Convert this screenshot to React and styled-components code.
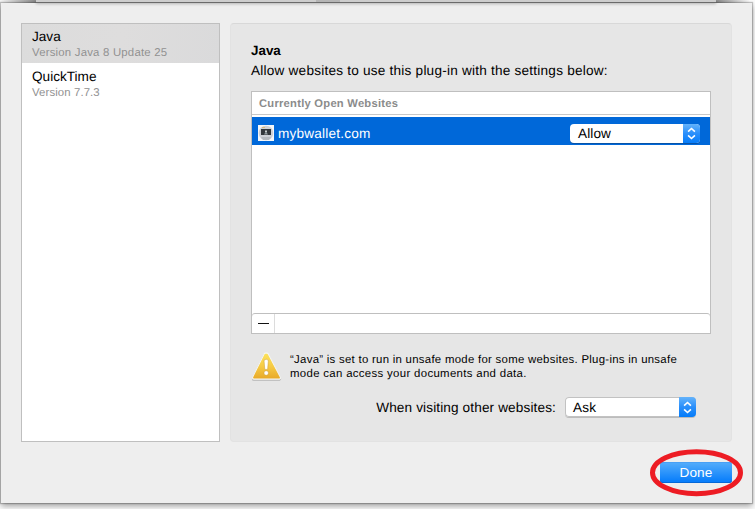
import React from "react";
import styled, { createGlobalStyle } from "styled-components";

const GlobalStyle = createGlobalStyle`
  * { box-sizing: border-box; }
  body { margin: 0; background: #fafafa; overflow: hidden; }
  #root { font-family: "Liberation Sans", Arial, sans-serif; font-size: 13px; color: #000; text-rendering: geometricPrecision; }
`;

const Desktop = styled.div`
  width: 755px;
  height: 509px;
  overflow: hidden;
  display: flex;
  flex-direction: column;
  background: linear-gradient(90deg, #f4f4f4 0, #8f8f8f 34px, #8f8f8f 718px, #fafafa 750px) top / 100% 3px no-repeat, #fafafa;
`;

const ParentWindowEdge = styled.div`
  flex: none;
  width: 680px;
  height: 3px;
  margin-left: 36px;
  border-bottom: 1px solid #6a6a6a;
  background: linear-gradient(90deg, #cdcdcd 280px, #b5b5b5 280px, #b5b5b5 304px, #cdcdcd 304px);
  box-shadow: 0 1px 3px rgba(0, 0, 0, 0.25);
  z-index: 1;
`;

const Sheet = styled.main`
  flex: none;
  width: 751px;
  height: 500px;
  margin-left: 1px;
  padding: 20px 20px 0;
  background: #eeeeee;
  box-shadow: 0 0 1px 1px rgba(0, 0, 0, 0.22), 0 3px 6px rgba(0, 0, 0, 0.36);
`;

const Columns = styled.div`
  display: flex;
  gap: 10px;
  height: 419px;
`;

const PluginList = styled.aside`
  width: 199px;
  border: 1px solid #bfbfbf;
  background: #fff;
`;

const PluginRow = styled.div`
  height: ${(p) => (p.$selected ? 39 : 40)}px;
  padding: ${(p) => (p.$selected ? 5 : 6)}px 10px 0;
  background: ${(p) => (p.$selected ? "linear-gradient(100deg, #dcdcdc, #dedddd 50%, #dadadb)" : "#fff")};
`;

const Label = styled.div`
  font-size: ${(p) => p.$size || 13.6}px;
  line-height: ${(p) => p.$line || 16}px;
  font-weight: ${(p) => (p.$bold ? 700 : 400)};
  letter-spacing: ${(p) => p.$track || 0}px;
  color: ${(p) => p.$color || "#000"};
  white-space: nowrap;
`;

const Panel = styled.section`
  width: 502px;
  padding: 19px 20px 0;
  border: 1px solid #e2e2e2;
  border-top-color: #d8d8d8;
  border-radius: 4px;
  background: #e6e6e6;
`;

const PanelHeading = styled.header`
  height: 48px;
  display: flex;
  flex-direction: column;
  gap: 4px;
`;

const SiteTable = styled.div`
  width: 460px;
  height: 243px;
  display: flex;
  flex-direction: column;
  border: 1px solid #bfbfbf;
  background: #fff;
`;

const TableHeader = styled.div`
  height: 23px;
  padding: 4px 7px 0;
  border-bottom: 1px solid #c8c8c8;
`;

const SiteRow = styled.div`
  height: 28px;
  margin-top: 2px;
  padding: 0 10px 0 6px;
  display: flex;
  align-items: center;
  background: #0068d9;
`;

const SiteName = styled(Label)`
  flex: 1;
  padding: 5px 0 0 4px;
`;

const SiteIcon = styled.svg`
  display: block;
  width: 16px;
  height: 16px;
  margin-top: 4px;
`;

const Popup = styled.div`
  width: ${(p) => p.$width}px;
  height: ${(p) => p.$height}px;
  margin-top: ${(p) => p.$drop || 0}px;
  display: flex;
  align-items: stretch;
  border-radius: 4px;
  overflow: hidden;
  background: #fff;
  box-shadow: ${(p) => (p.$onBlue ? "0 1px 0 #0753a8" : "inset 0 0 0 1px #c2c2c2, 0 1px 0 #bcbcbc")};
`;

const PopupValue = styled(Label)`
  flex: 1;
  padding-left: 8px;
`;

const Stepper = styled.span`
  width: 17px;
  display: grid;
  place-items: center;
  background: linear-gradient(#64b3fb, #2a8ffb 50%, #057cf9);
`;

const TableFooter = styled.div`
  height: 19px;
  margin-top: auto;
  display: flex;
  border-radius: 3px;
  background: #fff;
  box-shadow: 0 -1px 0 #bfbfbf;
`;

const RemoveButton = styled.span`
  width: 23px;
  display: grid;
  place-items: center;
  border-right: 1px solid #dcdcdc;
  &::before {
    content: "";
    width: 11px;
    height: 1px;
    background: #111;
  }
`;

const Warning = styled.div`
  height: 47px;
  padding-top: 18px;
  display: flex;
  gap: 8px;
`;

const WarningText = styled.div`
  padding-top: 1px;
`;

const WarningIcon = styled.svg`
  flex: none;
  display: block;
  width: 31px;
  height: 30px;
`;

const OtherSites = styled.div`
  display: flex;
  justify-content: flex-end;
  gap: 9px;
  padding: 16px 15px 0 0;
`;

const Footer = styled.footer`
  display: flex;
  justify-content: flex-end;
  padding-top: 20px;
`;

const DoneWrap = styled.div`
  position: relative;
`;

const DoneButton = styled.button`
  display: block;
  width: 72px;
  height: 21px;
  padding: 0;
  border: 0;
  border-radius: 3px;
  font-family: inherit;
  background: linear-gradient(#56aefb, #0a7ffb 90%);
  box-shadow: inset 0 1px 0 #49a0f5, inset 0 -1px 0 #0568d8;
`;

const Highlight = styled.svg`
  position: absolute;
  left: -11px;
  top: -14px;
  width: 95px;
  height: 50px;
  pointer-events: none;
`;

function Arrows() {
  return (
    <Stepper>
      <svg width="9" height="13" viewBox="0 0 9 13" fill="none" stroke="#fff" strokeWidth="1.6">
        <path d="M1.1 4.7 4.5 1.5 7.9 4.7M1.1 8.3 4.5 11.5 7.9 8.3" />
      </svg>
    </Stepper>
  );
}

function WebsiteGlyph() {
  return (
    <SiteIcon viewBox="0 0 16 16">
      <rect width="16" height="16" fill="#f5f7f9" />
      <circle cx="8" cy="8" r="7.3" fill="#cdd1d6" />
      <path d="M3 12h10l-2 3H5z" fill="#b4babf" />
      <rect x="3" y="4" width="10" height="6" fill="#32383c" />
      <path d="M6 9.5 8 6l2 3.5z" fill="#8d989c" />
      <rect x="7" y="5.5" width="2" height="1.5" fill="#c4caca" />
      <rect x="4" y="2" width="3" height="1" fill="#d9b97b" />
    </SiteIcon>
  );
}

function Caution() {
  return (
    <WarningIcon viewBox="0 0 31 30">
      <defs>
        <linearGradient id="amber" x2="0" y2="1">
          <stop offset="0" stopColor="#fbe05a" />
          <stop offset="0.5" stopColor="#f6cb45" />
          <stop offset="1" stopColor="#e9ac2b" />
        </linearGradient>
      </defs>
      <path d="M2.8 26.9 14.2 3.4h1.6L28.2 26.9Z" fill="#b5b5b5" stroke="#b5b5b5" strokeWidth="3.8" strokeLinejoin="round" />
      <path d="M2.8 26 14.4 2.4h1.6L28.2 26Z" fill="#f6f6f2" stroke="#f6f6f2" strokeWidth="3.6" strokeLinejoin="round" />
      <path d="M3 25.6 14.4 2.6h1.6L28 25.6Z" fill="url(#amber)" stroke="url(#amber)" strokeWidth="1.8" strokeLinejoin="round" />
      <path d="M13 8.4q2.2-2.4 4.4 0L16.6 17.4h-2.8z" fill="#fff" stroke="#c99b35" strokeWidth="0.5" />
      <circle cx="15.2" cy="21" r="2.3" fill="#fff" stroke="#c99b35" strokeWidth="0.5" />
    </WarningIcon>
  );
}

export default function App() {
  return (
    <Desktop>
      <GlobalStyle />
      <ParentWindowEdge />
      <Sheet>
        <Columns>
          <PluginList>
            <PluginRow $selected>
              <Label>Java</Label>
              <Label $size={11.4} $line={17} $track={0.2} $color="#919191">Version Java 8 Update 25</Label>
            </PluginRow>
            <PluginRow>
              <Label>QuickTime</Label>
              <Label $size={11.4} $line={17} $track={0.1} $color="#919191">Version 7.7.3</Label>
            </PluginRow>
          </PluginList>
          <Panel>
            <PanelHeading>
              <Label $bold $size={13.4}>Java</Label>
              <Label $track={0.22}>Allow websites to use this plug-in with the settings below:</Label>
            </PanelHeading>
            <SiteTable>
              <TableHeader>
                <Label $bold $size={11.2} $color="#8b8b8b" $track={0.25}>Currently Open Websites</Label>
              </TableHeader>
              <SiteRow>
                <WebsiteGlyph />
                <SiteName $color="#fff" $track={0.2}>mybwallet.com</SiteName>
                <Popup $width={130} $height={19} $drop={4} $onBlue>
                  <PopupValue $line={20} $track={0.1}>Allow</PopupValue>
                  <Arrows />
                </Popup>
              </SiteRow>
              <TableFooter>
                <RemoveButton />
              </TableFooter>
            </SiteTable>
            <Warning>
              <Caution />
              <WarningText>
                <Label $size={11.4} $line={14} $track={0.28}>“Java” is set to run in unsafe mode for some websites. Plug-ins in unsafe</Label>
                <Label $size={11.4} $line={14} $track={0.33}>mode can access your documents and data.</Label>
              </WarningText>
            </Warning>
            <OtherSites>
              <Label $line={21} $track={0.13}>When visiting other websites:</Label>
              <Popup $width={131} $height={20}>
                <PopupValue $line={21} $track={0.2}>Ask</PopupValue>
                <Arrows />
              </Popup>
            </OtherSites>
          </Panel>
        </Columns>
        <Footer>
          <DoneWrap>
            <DoneButton>
              <Label as="span" $color="#fff" $line={21} $track={0.1}>Done</Label>
            </DoneButton>
            <Highlight viewBox="0 0 95 50" fill="none" stroke="#ed1c24" strokeWidth="5">
              <ellipse cx="47.5" cy="24.7" rx="44" ry="21" />
            </Highlight>
          </DoneWrap>
        </Footer>
      </Sheet>
    </Desktop>
  );
}
